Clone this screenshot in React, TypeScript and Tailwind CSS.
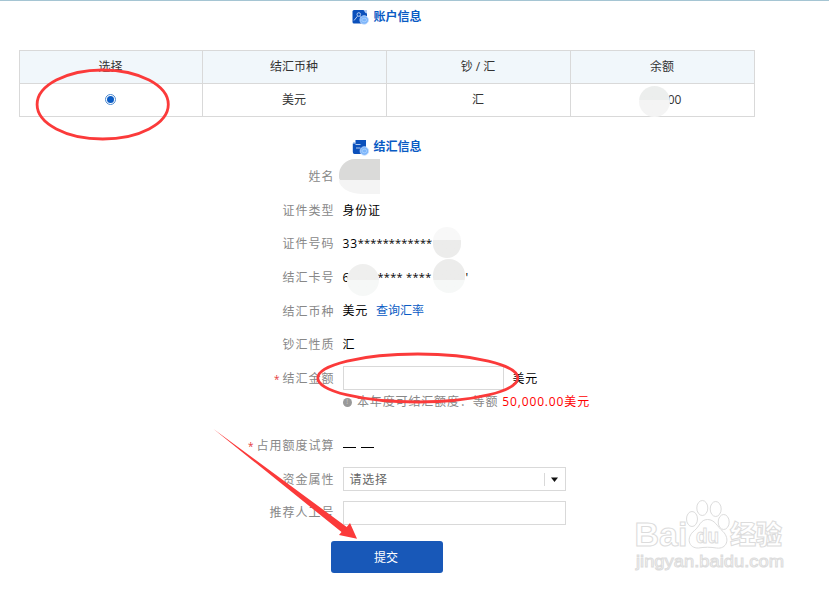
import type { ReactNode } from "react";

const columns = ["选择", "结汇币种", "钞 / 汇", "余额"];

const AccountIcon = () => (
  <svg className="shrink-0" width="18" height="16" viewBox="0 0 18 16">
    <rect x="0.5" y="1" width="14.5" height="13.5" rx="1.5" fill="#0b50bb" />
    <path d="M11.5 1H15v3.5l-1.500-.5z" fill="#b4cdf3" />
    <circle cx="6.8" cy="5.5" r="1.8" fill="none" stroke="#b4cdf3" />
    <path d="M2 11.5 5.5 7.2M8 7.2l2 2.3" stroke="#b4cdf3" fill="none" />
    <circle cx="12.2" cy="11" r="4.3" fill="#7db6fb" stroke="#c9e0ff" strokeWidth="0.8" />
    <ellipse cx="12.2" cy="11" rx="2.4" ry="1.8" fill="none" stroke="#a5cdfd" />
  </svg>
);

const ExchangeIcon = () => (
  <svg className="shrink-0" width="18" height="17" viewBox="0 0 18 17">
    <path d="M3.500 1H14v14H2.500Q.8 15 .8 13V4.500h2.700z" fill="#0b50bb" />
    <path d="M1 4h2.500" stroke="#6d9be0" />
    <path d="M3.500 5.500h5M4 9h4.500" stroke="#c3d7f4" strokeWidth="0.9" />
    <circle cx="12.400" cy="12" r="4.300" fill="#7db6fb" stroke="#c9e0ff" strokeWidth="0.8" />
    <ellipse cx="12.400" cy="12" rx="2.400" ry="1.800" fill="none" stroke="#a5cdfd" />
  </svg>
);

const SectionTitle = ({ icon, children }: { icon: ReactNode; children: ReactNode }) => (
  <h2 className="ml-[352px] flex h-5 items-center gap-[3.5px] text-[12px] font-semibold text-[#0a5bc4]">
    {icon}
    <span>{children}</span>
  </h2>
);

type RowProps = {
  label: string;
  required?: boolean;
  children?: ReactNode;
};

const Row = ({ label, required, children }: RowProps) => (
  <div className="flex h-[33.6px] items-center gap-2 tracking-[0.8px]">
    <div className="w-[334.5px] shrink-0 pt-px text-right tracking-[1px] text-[#888]">
      {required && <span className="mr-[2px] text-[10px] text-[#e4393c]">*</span>}
      {label}
    </div>
    <div className="relative flex items-center whitespace-pre text-black">{children}</div>
  </div>
);

const Watermark = () => (
  <svg
    className="absolute top-[494px] left-[630px]"
    width="165"
    height="80"
    fill="#fff"
    stroke="#dcdcdc"
    strokeWidth="1"
  >
    <g fontFamily="'Liberation Sans', Arial, sans-serif" fontWeight="700">
      <text x="4.500" y="50.500" fontSize="33" textLength="53" lengthAdjust="spacingAndGlyphs">
        Bai
      </text>
      <ellipse cx="62" cy="24" rx="5.500" ry="7.500" />
      <ellipse cx="72.300" cy="13" rx="5.500" ry="7.500" />
      <ellipse cx="85.700" cy="14" rx="5.500" ry="7.500" />
      <ellipse cx="93.700" cy="27" rx="5.500" ry="7.500" />
      <path d="M77.500 24.500c-7 0-8 7-13 11-9 7-6 18 4 17.500 6-1 12-1 18 0 10 1.500 14-9 6.500-16.500-6-5-8-12-15.500-12Z" />
      <text x="66" y="47.500" fontSize="21" textLength="23" lengthAdjust="spacingAndGlyphs">
        du
      </text>
    </g>
    <text
      x="100"
      y="49"
      fontSize="26"
      fontWeight="900"
      fontFamily="'Noto Sans CJK SC', sans-serif"
      textLength="52"
      lengthAdjust="spacingAndGlyphs"
    >
      经验
    </text>
    <text
      x="6"
      y="71.500"
      fontSize="17"
      fontFamily="'Liberation Sans', sans-serif"
      textLength="148"
      lengthAdjust="spacingAndGlyphs"
    >
      jingyan.baidu.com
    </text>
  </svg>
);

// hand-drawn red marks over the form
const Annotations = () => (
  <svg className="pointer-events-none absolute -top-px left-0" width="829" height="589">
    <g fill="none" stroke="#fb3a3a" strokeWidth="2.800">
      <ellipse cx="102.700" cy="104.500" rx="65.600" ry="34.500" />
      <ellipse cx="417.800" cy="378" rx="100" ry="24" />
    </g>
    <path d="M213.500 429 346.700 527 350 523 357 538.700 339 535 341.500 532Z" fill="#fb3a3a" />
  </svg>
);

export default function App() {
  return (
    <main className="relative h-[589px] w-[829px] overflow-hidden border-t border-[#a5c5d3] bg-white font-['Open_Sans','Noto_Sans_CJK_SC',sans-serif] text-[12px] leading-5">
      <div className="pt-[6px]">
        <SectionTitle icon={<AccountIcon />}>账户信息</SectionTitle>
      </div>

      <div className="mt-[23px] ml-[19px] grid w-[736px] grid-cols-[183px_184px_184px_184px] border-t border-l border-[#d9d9d9] text-center text-[#333]">
        {columns.map((name) => (
          <div key={name} className="h-[33px] border-r border-b border-[#d9d9d9] bg-[#f1f7fb] pt-1.5 pr-px">
            {name}
          </div>
        ))}
        <div className="flex h-[33px] items-center justify-center border-r border-b border-[#d9d9d9] pr-0.5 pb-0.5">
          <span className="flex size-[11px] items-center justify-center rounded-full border border-[#4d8ad0] bg-white">
            <span className="size-[7px] rounded-full bg-[#0a5bc4]" />
          </span>
        </div>
        <div className="h-[33px] border-r border-b border-[#d9d9d9] pt-1.5 pr-px">美元</div>
        <div className="h-[33px] border-r border-b border-[#d9d9d9] pt-1.5 pr-px">汇</div>
        <div className="relative h-[33px] border-r border-b border-[#d9d9d9] pt-1.5 pl-6">
          00
          <span className="absolute top-[2px] left-[68px] size-[31px] rounded-full bg-linear-to-b from-[#eceeed] from-45% to-[#f4f4f4] to-45%" />
        </div>
      </div>

      <div className="mt-5">
        <SectionTitle icon={<ExchangeIcon />}>结汇信息</SectionTitle>
      </div>

      <div className="mt-[3px]">
        <Row label="姓名">
          <span className="absolute -top-[18px] -left-[4px] h-[22px] w-[41px] rounded-tl-[16px] rounded-bl-[4px] bg-[#dadad9]" />
          <span className="absolute top-[3px] -left-[4px] h-[14px] w-[41px] rounded-bl-[24px_14px] bg-[#f4f4f4]" />
        </Row>
        <Row label="证件类型">
          <span className="pt-px">身份证</span>
        </Row>
        <Row label="证件号码">
          33<span className="pb-0.5 text-[11px] tracking-[0.150px]">************</span>
          <span className="absolute -top-[6px] left-[90px] h-[31px] w-7 rounded-[14px] bg-linear-to-b from-[#f8f8f8] from-42% to-[#ececeb] to-42%" />
        </Row>
        <Row label="结汇卡号">
          <span className="w-[35px]">6</span>
          <span className="pb-0.5 text-[11px] tracking-[0.300px]">**** ****</span>
          <span className="ml-[34px]">'</span>
          <span className="absolute -top-[3px] left-[4px] size-8 rounded-full bg-linear-to-b from-[#efefee] from-50% to-[#f6f8f7] to-50%" />
          <span className="absolute -top-[8px] left-[90px] h-[34px] w-8 rounded-full bg-linear-to-b from-[#ececeb] from-62% to-[#f6f8f7] to-62%" />
        </Row>
        <Row label="结汇币种">
          美元
          <a href="#" className="ml-2 tracking-normal text-[#0a5bc4]">
            查询汇率
          </a>
        </Row>
        <Row label="钞汇性质">
          <span className="pt-px">汇</span>
        </Row>
        <Row label="结汇金额" required>
          <input className="mr-[9px] h-6 w-[161px] border border-[#d9d9d9]" />
          <span className="pt-px">美元</span>
        </Row>
      </div>

      <div className="-mt-[3px] ml-[343px] flex h-5 items-center tracking-[0.850px] text-[#888]">
        <span className="mr-[5px] flex size-[9px] items-center justify-center rounded-full bg-[#999] text-[7px] text-[#ccc]">
          !
        </span>
        本年度可结汇额度：等额
        <span className="ml-1 text-[#f00]">50,000.00美元</span>
      </div>

      <div className="mt-[16.6px]">
        <Row label="占用额度试算" required>
          <span className="flex gap-[5px] pt-[3px]">
            <span className="h-px w-[13px] bg-black" />
            <span className="h-px w-[13px] bg-black" />
          </span>
        </Row>
        <Row label="资金属性">
          <div className="flex h-6 w-[223px] items-center border border-[#d9d9d9] pt-px pl-1.5 text-[#666]">
            请选择
            <span className="ml-auto flex h-[13px] w-[21px] items-center justify-center border-l border-[#d9d9d9]">
              <svg width="7" height="5" viewBox="0 0 7 5">
                <path d="M0 .5h7L3.500 5Z" fill="#111" />
              </svg>
            </span>
          </div>
        </Row>
        <Row label="推荐人工号">
          <input className="h-6 w-[223px] border border-[#d9d9d9]" />
        </Row>
      </div>

      <button className="mt-[11.4px] ml-[331px] block h-8 w-28 rounded-[3px] bg-[#1858b8] pt-0.5 pr-0.5 text-white">
        提交
      </button>

      <Watermark />
      <Annotations />
    </main>
  );
}
